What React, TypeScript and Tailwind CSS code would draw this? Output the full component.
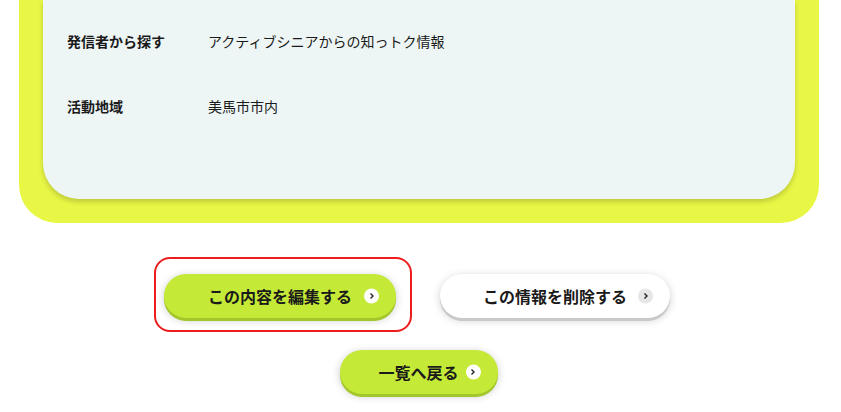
import React from "react";

function Chevron({ bg }: { bg: string }) {
  return (
    <span className={`absolute right-[17px] top-1/2 -translate-y-1/2 flex h-[15px] w-[15px] items-center justify-center rounded-full ${bg}`}>
      <svg width="6" height="7" viewBox="0 0 6 7">
        <path d="M1.5 1 L4 3.5 L1.5 6" fill="none" stroke="#222" strokeWidth="1.4" />
      </svg>
    </span>
  );
}

export default function App() {
  const font = { fontFamily: '"Noto Sans CJK JP", "Noto Sans", sans-serif' };
  return (
    <div className="w-[841px] h-[412px] bg-white overflow-hidden text-[#1a1a1a]" style={font}>
      <div className="ml-[19px] w-[800px] bg-[#e8f645] rounded-b-[38px] px-6 pb-6">
        <div className="bg-[#eef6f5] rounded-b-[36px] px-6 pt-[31px] pb-[83px] shadow-[0_3px_5px_rgba(0,0,0,0.18)] flex flex-col gap-[45px]">
          <div className="flex text-[14px] leading-[20px]">
            <div className="w-[141px] font-bold">発信者から探す</div>
            <div>アクティブシニアからの知っトク情報</div>
          </div>
          <div className="flex text-[14px] leading-[20px]">
            <div className="w-[141px] font-bold">活動地域</div>
            <div>美馬市市内</div>
          </div>
        </div>
      </div>

      <div className="mt-[51px] flex flex-col items-center gap-[32px] pr-[4px]">
        <div className="flex gap-[44px] -ml-[3px]">
          <div className="relative">
            <div className="absolute -left-[10px] -right-[16px] -top-[17px] -bottom-[14px] rounded-[16px] border-2 border-[#ee1c1c]" />
            <button className="relative flex h-[44px] w-[232px] items-center justify-center rounded-full bg-[#c4e936] text-[16px] font-bold shadow-[0_3px_0_#a3c62b,0_2px_8px_rgba(0,0,0,0.22)]">
              この内容を編集する
              <Chevron bg="bg-white" />
            </button>
          </div>
          <button className="relative flex h-[44px] w-[230px] items-center justify-center rounded-full bg-white text-[16px] font-bold shadow-[0_3px_0_#c9c9c9,0_2px_8px_rgba(0,0,0,0.2)]">
            この情報を削除する
            <Chevron bg="bg-[#e6e6e6]" />
          </button>
        </div>
        <button className="relative flex h-[44px] w-[158px] items-center justify-center rounded-full bg-[#c4e936] text-[16px] font-bold shadow-[0_3px_0_#a3c62b,0_2px_8px_rgba(0,0,0,0.22)]">
          一覧へ戻る
          <Chevron bg="bg-white" />
        </button>
      </div>
    </div>
  );
}
